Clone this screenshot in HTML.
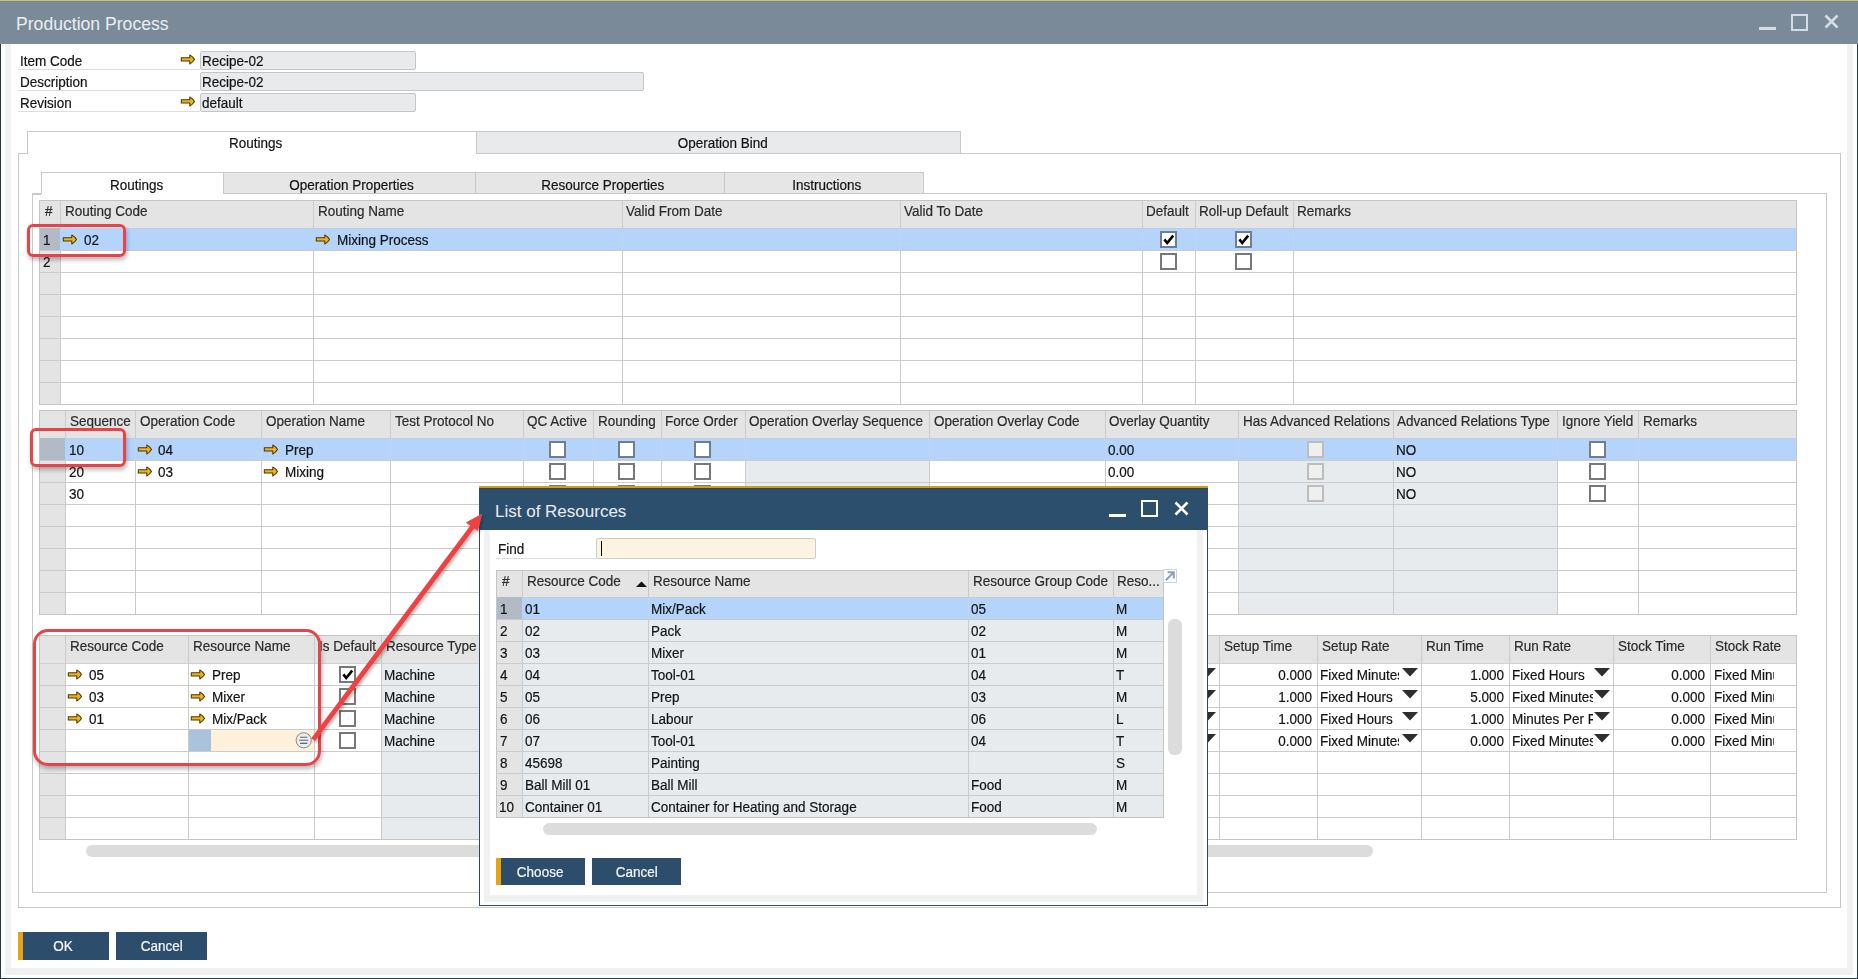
<!DOCTYPE html><html><head><meta charset="utf-8"><style>html,body{margin:0;padding:0;}body{width:1858px;height:979px;overflow:hidden;position:relative;background:#fff;-webkit-text-stroke:0.2px currentColor;font-family:"Liberation Sans", sans-serif;}</style></head><body>
<div style="position:absolute;left:0px;top:0px;width:1858px;height:1px;background:#c6bf9c;"></div>
<div style="position:absolute;left:0px;top:1px;width:1858px;height:1px;background:#81867a;"></div>
<div style="position:absolute;left:0px;top:2px;width:1858px;height:42px;background:#7a8a99;"></div>
<div style="position:absolute;left:16px;top:15.80px;font-size:17.6px;line-height:17.6px;color:#e9eef2;white-space:nowrap;-webkit-text-stroke:0;">Production Process</div>
<div style="position:absolute;left:1759px;top:27px;width:17px;height:3px;background:#d3dce5;"></div>
<div style="position:absolute;left:1791px;top:13.5px;width:17px;height:17px;box-sizing:border-box;border:2px solid #d3dce5;background:transparent;"></div>
<svg style="position:absolute;left:1823px;top:13px" width="17" height="17" viewBox="0 0 17 17"><path d="M2.5 2.5 L14.5 14.5 M14.5 2.5 L2.5 14.5" stroke="#d3dce5" stroke-width="2.6"/></svg>
<div style="position:absolute;left:0px;top:44px;width:1px;height:935px;background:#2a3744;"></div>
<div style="position:absolute;left:1857px;top:44px;width:1px;height:935px;background:#2a3744;"></div>
<div style="position:absolute;left:0px;top:978px;width:1858px;height:1px;background:#2a3744;"></div>
<div style="position:absolute;left:5px;top:44px;width:6px;height:931px;background:#f1f1f1;"></div>
<div style="position:absolute;left:1847px;top:44px;width:6px;height:931px;background:#f1f1f1;"></div>
<div style="position:absolute;left:5px;top:968px;width:1848px;height:7px;background:#f1f1f1;"></div>
<div style="position:absolute;left:20px;top:54.15px;font-size:14.0px;line-height:14.0px;color:#141414;white-space:nowrap;"><span style="display:inline-block;transform:scaleX(0.9643);transform-origin:left 50%">Item Code</span></div>
<div style="position:absolute;left:18px;top:69px;width:182px;height:1px;background:#dddddd;"></div>
<svg style="position:absolute;left:180px;top:52.5px" width="17" height="14" viewBox="0 0 17 14"><path d="M1.3 4.8 H9.8 V1.9 Q12.8 3.6 14.5 6.45 Q12.8 9.3 9.8 11 V8 H1.3 Z" fill="#edb21e" stroke="#4d3600" stroke-width="1.05" stroke-linejoin="round"/></svg>
<div style="position:absolute;left:200px;top:51px;width:216px;height:19px;box-sizing:border-box;border:1px solid #c3c5c8;background:#e8eaec;border-radius:2px;"></div>
<div style="position:absolute;left:202px;top:54.15px;font-size:14.0px;line-height:14.0px;color:#141414;white-space:nowrap;"><span style="display:inline-block;transform:scaleX(0.9643);transform-origin:left 50%">Recipe-02</span></div>
<div style="position:absolute;left:20px;top:75.15px;font-size:14.0px;line-height:14.0px;color:#141414;white-space:nowrap;"><span style="display:inline-block;transform:scaleX(0.9643);transform-origin:left 50%">Description</span></div>
<div style="position:absolute;left:18px;top:90px;width:182px;height:1px;background:#dddddd;"></div>
<div style="position:absolute;left:200px;top:72px;width:444px;height:19px;box-sizing:border-box;border:1px solid #c3c5c8;background:#e8eaec;border-radius:2px;"></div>
<div style="position:absolute;left:202px;top:75.15px;font-size:14.0px;line-height:14.0px;color:#141414;white-space:nowrap;"><span style="display:inline-block;transform:scaleX(0.9643);transform-origin:left 50%">Recipe-02</span></div>
<div style="position:absolute;left:20px;top:96.15px;font-size:14.0px;line-height:14.0px;color:#141414;white-space:nowrap;"><span style="display:inline-block;transform:scaleX(0.9643);transform-origin:left 50%">Revision</span></div>
<div style="position:absolute;left:18px;top:111px;width:182px;height:1px;background:#dddddd;"></div>
<svg style="position:absolute;left:180px;top:94.5px" width="17" height="14" viewBox="0 0 17 14"><path d="M1.3 4.8 H9.8 V1.9 Q12.8 3.6 14.5 6.45 Q12.8 9.3 9.8 11 V8 H1.3 Z" fill="#edb21e" stroke="#4d3600" stroke-width="1.05" stroke-linejoin="round"/></svg>
<div style="position:absolute;left:200px;top:93px;width:216px;height:19px;box-sizing:border-box;border:1px solid #c3c5c8;background:#e8eaec;border-radius:2px;"></div>
<div style="position:absolute;left:202px;top:96.15px;font-size:14.0px;line-height:14.0px;color:#141414;white-space:nowrap;"><span style="display:inline-block;transform:scaleX(0.9643);transform-origin:left 50%">default</span></div>
<div style="position:absolute;left:18px;top:153px;width:1823px;height:755px;box-sizing:border-box;border:1px solid #c9c9c9;background:transparent;"></div>
<div style="position:absolute;left:19px;top:153px;width:8px;height:1px;background:#c9c9c9;"></div>
<div style="position:absolute;left:27px;top:131px;width:1px;height:23px;background:#c9c9c9;"></div>
<div style="position:absolute;left:27px;top:131px;width:449px;height:1px;background:#c9c9c9;"></div>
<div style="position:absolute;left:28px;top:132px;width:448px;height:22px;background:#fff;"></div>
<div style="position:absolute;left:476px;top:131px;width:485px;height:23px;box-sizing:border-box;border:1px solid #c9c9c9;background:#e8eaec;"></div>
<div style="position:absolute;left:-44px;width:600px;text-align:center;top:136.15px;font-size:14.0px;line-height:14.0px;color:#141414;white-space:nowrap;"><span style="display:inline-block;transform:scaleX(0.9643);transform-origin:center 50%">Routings</span></div>
<div style="position:absolute;left:423px;width:600px;text-align:center;top:136.15px;font-size:14.0px;line-height:14.0px;color:#141414;white-space:nowrap;"><span style="display:inline-block;transform:scaleX(0.9643);transform-origin:center 50%">Operation Bind</span></div>
<div style="position:absolute;left:32px;top:193px;width:1795px;height:700px;box-sizing:border-box;border:1px solid #c9c9c9;background:transparent;"></div>
<div style="position:absolute;left:41px;top:172px;width:1px;height:22px;background:#c9c9c9;"></div>
<div style="position:absolute;left:41px;top:172px;width:182px;height:1px;background:#c9c9c9;"></div>
<div style="position:absolute;left:33px;top:194px;width:8px;height:1px;background:#c9c9c9;"></div>
<div style="position:absolute;left:42px;top:173px;width:181px;height:21px;background:#fff;"></div>
<div style="position:absolute;left:223px;top:172px;width:253px;height:22px;box-sizing:border-box;border:1px solid #c9c9c9;background:#e6e6e6;"></div>
<div style="position:absolute;left:52.0px;width:600px;text-align:center;top:177.65px;font-size:14.0px;line-height:14.0px;color:#141414;white-space:nowrap;"><span style="display:inline-block;transform:scaleX(0.9643);transform-origin:center 50%">Operation Properties</span></div>
<div style="position:absolute;left:475px;top:172px;width:250px;height:22px;box-sizing:border-box;border:1px solid #c9c9c9;background:#e6e6e6;"></div>
<div style="position:absolute;left:302.5px;width:600px;text-align:center;top:177.65px;font-size:14.0px;line-height:14.0px;color:#141414;white-space:nowrap;"><span style="display:inline-block;transform:scaleX(0.9643);transform-origin:center 50%">Resource Properties</span></div>
<div style="position:absolute;left:724px;top:172px;width:200px;height:22px;box-sizing:border-box;border:1px solid #c9c9c9;background:#e6e6e6;"></div>
<div style="position:absolute;left:526.5px;width:600px;text-align:center;top:177.65px;font-size:14.0px;line-height:14.0px;color:#141414;white-space:nowrap;"><span style="display:inline-block;transform:scaleX(0.9643);transform-origin:center 50%">Instructions</span></div>
<div style="position:absolute;left:-163px;width:600px;text-align:center;top:177.65px;font-size:14.0px;line-height:14.0px;color:#141414;white-space:nowrap;"><span style="display:inline-block;transform:scaleX(0.9643);transform-origin:center 50%">Routings</span></div>
<div style="position:absolute;left:39px;top:200px;width:1757px;height:204px;background:#fff;"></div>
<div style="position:absolute;left:39px;top:200px;width:1757px;height:28px;background:#e4e4e4;"></div>
<div style="position:absolute;left:39px;top:200px;width:21px;height:204px;background:#e4e4e4;"></div>
<div style="position:absolute;left:39px;top:228px;width:1757px;height:1px;background:#d2d2d2;"></div>
<div style="position:absolute;left:39px;top:250px;width:1757px;height:1px;background:#cbcbcb;"></div>
<div style="position:absolute;left:39px;top:272px;width:1757px;height:1px;background:#cbcbcb;"></div>
<div style="position:absolute;left:39px;top:294px;width:1757px;height:1px;background:#cbcbcb;"></div>
<div style="position:absolute;left:39px;top:316px;width:1757px;height:1px;background:#cbcbcb;"></div>
<div style="position:absolute;left:39px;top:338px;width:1757px;height:1px;background:#cbcbcb;"></div>
<div style="position:absolute;left:39px;top:360px;width:1757px;height:1px;background:#cbcbcb;"></div>
<div style="position:absolute;left:39px;top:382px;width:1757px;height:1px;background:#cbcbcb;"></div>
<div style="position:absolute;left:60px;top:200px;width:1px;height:204px;background:#cbcbcb;"></div>
<div style="position:absolute;left:313px;top:200px;width:1px;height:204px;background:#cbcbcb;"></div>
<div style="position:absolute;left:622px;top:200px;width:1px;height:204px;background:#cbcbcb;"></div>
<div style="position:absolute;left:900px;top:200px;width:1px;height:204px;background:#cbcbcb;"></div>
<div style="position:absolute;left:1142px;top:200px;width:1px;height:204px;background:#cbcbcb;"></div>
<div style="position:absolute;left:1195px;top:200px;width:1px;height:204px;background:#cbcbcb;"></div>
<div style="position:absolute;left:1293px;top:200px;width:1px;height:204px;background:#cbcbcb;"></div>
<div style="position:absolute;left:39px;top:200px;width:1758px;height:205px;box-sizing:border-box;border:1px solid #c4c4c4;background:transparent;"></div>
<div style="position:absolute;left:60px;top:228px;width:1736px;height:22px;background:#b4d4fb;"></div>
<div style="position:absolute;left:40px;top:228px;width:20px;height:22px;background:#b2bbc5;"></div>
<div style="position:absolute;left:60px;top:228px;width:1736px;height:1px;background:#c3cedb;"></div>
<div style="position:absolute;left:313px;top:229px;width:1px;height:21px;background:#c2d5ec;"></div>
<div style="position:absolute;left:622px;top:229px;width:1px;height:21px;background:#c2d5ec;"></div>
<div style="position:absolute;left:900px;top:229px;width:1px;height:21px;background:#c2d5ec;"></div>
<div style="position:absolute;left:1142px;top:229px;width:1px;height:21px;background:#c2d5ec;"></div>
<div style="position:absolute;left:1195px;top:229px;width:1px;height:21px;background:#c2d5ec;"></div>
<div style="position:absolute;left:1293px;top:229px;width:1px;height:21px;background:#c2d5ec;"></div>
<div style="position:absolute;left:45px;top:204.15px;font-size:14.0px;line-height:14.0px;color:#2b2b2b;white-space:nowrap;"><span style="display:inline-block;transform:scaleX(0.9643);transform-origin:left 50%">#</span></div>
<div style="position:absolute;left:65px;top:204.15px;font-size:14.0px;line-height:14.0px;color:#2b2b2b;white-space:nowrap;"><span style="display:inline-block;transform:scaleX(0.9643);transform-origin:left 50%">Routing Code</span></div>
<div style="position:absolute;left:318px;top:204.15px;font-size:14.0px;line-height:14.0px;color:#2b2b2b;white-space:nowrap;"><span style="display:inline-block;transform:scaleX(0.9643);transform-origin:left 50%">Routing Name</span></div>
<div style="position:absolute;left:626px;top:204.15px;font-size:14.0px;line-height:14.0px;color:#2b2b2b;white-space:nowrap;"><span style="display:inline-block;transform:scaleX(0.9643);transform-origin:left 50%">Valid From Date</span></div>
<div style="position:absolute;left:904px;top:204.15px;font-size:14.0px;line-height:14.0px;color:#2b2b2b;white-space:nowrap;"><span style="display:inline-block;transform:scaleX(0.9643);transform-origin:left 50%">Valid To Date</span></div>
<div style="position:absolute;left:1146px;top:204.15px;font-size:14.0px;line-height:14.0px;color:#2b2b2b;white-space:nowrap;"><span style="display:inline-block;transform:scaleX(0.9643);transform-origin:left 50%">Default</span></div>
<div style="position:absolute;left:1199px;top:204.15px;font-size:14.0px;line-height:14.0px;color:#2b2b2b;white-space:nowrap;"><span style="display:inline-block;transform:scaleX(0.9643);transform-origin:left 50%">Roll-up Default</span></div>
<div style="position:absolute;left:1297px;top:204.15px;font-size:14.0px;line-height:14.0px;color:#2b2b2b;white-space:nowrap;"><span style="display:inline-block;transform:scaleX(0.9643);transform-origin:left 50%">Remarks</span></div>
<div style="position:absolute;left:43px;top:233.15px;font-size:14.0px;line-height:14.0px;color:#141414;white-space:nowrap;"><span style="display:inline-block;transform:scaleX(0.9643);transform-origin:left 50%">1</span></div>
<div style="position:absolute;left:43px;top:255.15px;font-size:14.0px;line-height:14.0px;color:#141414;white-space:nowrap;"><span style="display:inline-block;transform:scaleX(0.9643);transform-origin:left 50%">2</span></div>
<svg style="position:absolute;left:62px;top:232.5px" width="17" height="14" viewBox="0 0 17 14"><path d="M1.3 4.8 H9.8 V1.9 Q12.8 3.6 14.5 6.45 Q12.8 9.3 9.8 11 V8 H1.3 Z" fill="#edb21e" stroke="#4d3600" stroke-width="1.05" stroke-linejoin="round"/></svg>
<div style="position:absolute;left:84px;top:233.15px;font-size:14.0px;line-height:14.0px;color:#141414;white-space:nowrap;"><span style="display:inline-block;transform:scaleX(0.9643);transform-origin:left 50%">02</span></div>
<svg style="position:absolute;left:315px;top:232.5px" width="17" height="14" viewBox="0 0 17 14"><path d="M1.3 4.8 H9.8 V1.9 Q12.8 3.6 14.5 6.45 Q12.8 9.3 9.8 11 V8 H1.3 Z" fill="#edb21e" stroke="#4d3600" stroke-width="1.05" stroke-linejoin="round"/></svg>
<div style="position:absolute;left:337px;top:233.15px;font-size:14.0px;line-height:14.0px;color:#141414;white-space:nowrap;"><span style="display:inline-block;transform:scaleX(0.9643);transform-origin:left 50%">Mixing Process</span></div>
<div style="position:absolute;left:1160px;top:231px;width:17px;height:17px;box-sizing:border-box;border:2px solid #6f7f90;background:#fff;"></div>
<svg style="position:absolute;left:1160px;top:231px" width="17" height="17" viewBox="0 0 17 17"><path d="M4.4 8.4 L7.2 12 L13.2 4.6" fill="none" stroke="#000" stroke-width="2.6"/></svg>
<div style="position:absolute;left:1235px;top:231px;width:17px;height:17px;box-sizing:border-box;border:2px solid #6f7f90;background:#fff;"></div>
<svg style="position:absolute;left:1235px;top:231px" width="17" height="17" viewBox="0 0 17 17"><path d="M4.4 8.4 L7.2 12 L13.2 4.6" fill="none" stroke="#000" stroke-width="2.6"/></svg>
<div style="position:absolute;left:1160px;top:253px;width:17px;height:17px;box-sizing:border-box;border:2px solid #787878;background:#fff;"></div>
<div style="position:absolute;left:1235px;top:253px;width:17px;height:17px;box-sizing:border-box;border:2px solid #787878;background:#fff;"></div>
<div style="position:absolute;left:39px;top:410px;width:1757px;height:204px;background:#fff;"></div>
<div style="position:absolute;left:39px;top:410px;width:1757px;height:28px;background:#e4e4e4;"></div>
<div style="position:absolute;left:39px;top:410px;width:26px;height:204px;background:#e4e4e4;"></div>
<div style="position:absolute;left:745px;top:460px;width:184px;height:154px;background:#e8ebee;"></div>
<div style="position:absolute;left:1238px;top:460px;width:319px;height:154px;background:#e8ebee;"></div>
<div style="position:absolute;left:39px;top:438px;width:1757px;height:1px;background:#d2d2d2;"></div>
<div style="position:absolute;left:39px;top:460px;width:1757px;height:1px;background:#cbcbcb;"></div>
<div style="position:absolute;left:39px;top:482px;width:1757px;height:1px;background:#cbcbcb;"></div>
<div style="position:absolute;left:39px;top:504px;width:1757px;height:1px;background:#cbcbcb;"></div>
<div style="position:absolute;left:39px;top:526px;width:1757px;height:1px;background:#cbcbcb;"></div>
<div style="position:absolute;left:39px;top:548px;width:1757px;height:1px;background:#cbcbcb;"></div>
<div style="position:absolute;left:39px;top:570px;width:1757px;height:1px;background:#cbcbcb;"></div>
<div style="position:absolute;left:39px;top:592px;width:1757px;height:1px;background:#cbcbcb;"></div>
<div style="position:absolute;left:65px;top:410px;width:1px;height:204px;background:#cbcbcb;"></div>
<div style="position:absolute;left:135px;top:410px;width:1px;height:204px;background:#cbcbcb;"></div>
<div style="position:absolute;left:261px;top:410px;width:1px;height:204px;background:#cbcbcb;"></div>
<div style="position:absolute;left:390px;top:410px;width:1px;height:204px;background:#cbcbcb;"></div>
<div style="position:absolute;left:523px;top:410px;width:1px;height:204px;background:#cbcbcb;"></div>
<div style="position:absolute;left:593px;top:410px;width:1px;height:204px;background:#cbcbcb;"></div>
<div style="position:absolute;left:661px;top:410px;width:1px;height:204px;background:#cbcbcb;"></div>
<div style="position:absolute;left:745px;top:410px;width:1px;height:204px;background:#cbcbcb;"></div>
<div style="position:absolute;left:929px;top:410px;width:1px;height:204px;background:#cbcbcb;"></div>
<div style="position:absolute;left:1105px;top:410px;width:1px;height:204px;background:#cbcbcb;"></div>
<div style="position:absolute;left:1238px;top:410px;width:1px;height:204px;background:#cbcbcb;"></div>
<div style="position:absolute;left:1393px;top:410px;width:1px;height:204px;background:#cbcbcb;"></div>
<div style="position:absolute;left:1557px;top:410px;width:1px;height:204px;background:#cbcbcb;"></div>
<div style="position:absolute;left:1638px;top:410px;width:1px;height:204px;background:#cbcbcb;"></div>
<div style="position:absolute;left:39px;top:410px;width:1758px;height:205px;box-sizing:border-box;border:1px solid #c4c4c4;background:transparent;"></div>
<div style="position:absolute;left:65px;top:438px;width:1731px;height:22px;background:#b4d4fb;"></div>
<div style="position:absolute;left:40px;top:438px;width:25px;height:22px;background:#b2bbc5;"></div>
<div style="position:absolute;left:65px;top:438px;width:1731px;height:1px;background:#c3cedb;"></div>
<div style="position:absolute;left:135px;top:439px;width:1px;height:21px;background:#c2d5ec;"></div>
<div style="position:absolute;left:261px;top:439px;width:1px;height:21px;background:#c2d5ec;"></div>
<div style="position:absolute;left:390px;top:439px;width:1px;height:21px;background:#c2d5ec;"></div>
<div style="position:absolute;left:523px;top:439px;width:1px;height:21px;background:#c2d5ec;"></div>
<div style="position:absolute;left:593px;top:439px;width:1px;height:21px;background:#c2d5ec;"></div>
<div style="position:absolute;left:661px;top:439px;width:1px;height:21px;background:#c2d5ec;"></div>
<div style="position:absolute;left:745px;top:439px;width:1px;height:21px;background:#c2d5ec;"></div>
<div style="position:absolute;left:929px;top:439px;width:1px;height:21px;background:#c2d5ec;"></div>
<div style="position:absolute;left:1105px;top:439px;width:1px;height:21px;background:#c2d5ec;"></div>
<div style="position:absolute;left:1238px;top:439px;width:1px;height:21px;background:#c2d5ec;"></div>
<div style="position:absolute;left:1393px;top:439px;width:1px;height:21px;background:#c2d5ec;"></div>
<div style="position:absolute;left:1557px;top:439px;width:1px;height:21px;background:#c2d5ec;"></div>
<div style="position:absolute;left:1638px;top:439px;width:1px;height:21px;background:#c2d5ec;"></div>
<div style="position:absolute;left:70px;top:414.15px;font-size:14.0px;line-height:14.0px;color:#2b2b2b;white-space:nowrap;"><span style="display:inline-block;transform:scaleX(0.9643);transform-origin:left 50%">Sequence</span></div>
<div style="position:absolute;left:140px;top:414.15px;font-size:14.0px;line-height:14.0px;color:#2b2b2b;white-space:nowrap;"><span style="display:inline-block;transform:scaleX(0.9643);transform-origin:left 50%">Operation Code</span></div>
<div style="position:absolute;left:266px;top:414.15px;font-size:14.0px;line-height:14.0px;color:#2b2b2b;white-space:nowrap;"><span style="display:inline-block;transform:scaleX(0.9643);transform-origin:left 50%">Operation Name</span></div>
<div style="position:absolute;left:395px;top:414.15px;font-size:14.0px;line-height:14.0px;color:#2b2b2b;white-space:nowrap;"><span style="display:inline-block;transform:scaleX(0.9643);transform-origin:left 50%">Test Protocol No</span></div>
<div style="position:absolute;left:527px;top:414.15px;font-size:14.0px;line-height:14.0px;color:#2b2b2b;white-space:nowrap;"><span style="display:inline-block;transform:scaleX(0.9643);transform-origin:left 50%">QC Active</span></div>
<div style="position:absolute;left:598px;top:414.15px;font-size:14.0px;line-height:14.0px;color:#2b2b2b;white-space:nowrap;"><span style="display:inline-block;transform:scaleX(0.9643);transform-origin:left 50%">Rounding</span></div>
<div style="position:absolute;left:665px;top:414.15px;font-size:14.0px;line-height:14.0px;color:#2b2b2b;white-space:nowrap;"><span style="display:inline-block;transform:scaleX(0.9643);transform-origin:left 50%">Force Order</span></div>
<div style="position:absolute;left:749px;top:414.15px;font-size:14.0px;line-height:14.0px;color:#2b2b2b;white-space:nowrap;"><span style="display:inline-block;transform:scaleX(0.9643);transform-origin:left 50%">Operation Overlay Sequence</span></div>
<div style="position:absolute;left:934px;top:414.15px;font-size:14.0px;line-height:14.0px;color:#2b2b2b;white-space:nowrap;"><span style="display:inline-block;transform:scaleX(0.9643);transform-origin:left 50%">Operation Overlay Code</span></div>
<div style="position:absolute;left:1109px;top:414.15px;font-size:14.0px;line-height:14.0px;color:#2b2b2b;white-space:nowrap;"><span style="display:inline-block;transform:scaleX(0.9643);transform-origin:left 50%">Overlay Quantity</span></div>
<div style="position:absolute;left:1243px;top:414.15px;font-size:14.0px;line-height:14.0px;color:#2b2b2b;white-space:nowrap;"><span style="display:inline-block;transform:scaleX(0.9643);transform-origin:left 50%">Has Advanced Relations</span></div>
<div style="position:absolute;left:1397px;top:414.15px;font-size:14.0px;line-height:14.0px;color:#2b2b2b;white-space:nowrap;"><span style="display:inline-block;transform:scaleX(0.9643);transform-origin:left 50%">Advanced Relations Type</span></div>
<div style="position:absolute;left:1562px;top:414.15px;font-size:14.0px;line-height:14.0px;color:#2b2b2b;white-space:nowrap;"><span style="display:inline-block;transform:scaleX(0.9643);transform-origin:left 50%">Ignore Yield</span></div>
<div style="position:absolute;left:1643px;top:414.15px;font-size:14.0px;line-height:14.0px;color:#2b2b2b;white-space:nowrap;"><span style="display:inline-block;transform:scaleX(0.9643);transform-origin:left 50%">Remarks</span></div>
<div style="position:absolute;left:69px;top:443.15px;font-size:14.0px;line-height:14.0px;color:#141414;white-space:nowrap;"><span style="display:inline-block;transform:scaleX(0.9643);transform-origin:left 50%">10</span></div>
<svg style="position:absolute;left:137px;top:442.5px" width="17" height="14" viewBox="0 0 17 14"><path d="M1.3 4.8 H9.8 V1.9 Q12.8 3.6 14.5 6.45 Q12.8 9.3 9.8 11 V8 H1.3 Z" fill="#edb21e" stroke="#4d3600" stroke-width="1.05" stroke-linejoin="round"/></svg>
<div style="position:absolute;left:158px;top:443.15px;font-size:14.0px;line-height:14.0px;color:#141414;white-space:nowrap;"><span style="display:inline-block;transform:scaleX(0.9643);transform-origin:left 50%">04</span></div>
<svg style="position:absolute;left:263px;top:442.5px" width="17" height="14" viewBox="0 0 17 14"><path d="M1.3 4.8 H9.8 V1.9 Q12.8 3.6 14.5 6.45 Q12.8 9.3 9.8 11 V8 H1.3 Z" fill="#edb21e" stroke="#4d3600" stroke-width="1.05" stroke-linejoin="round"/></svg>
<div style="position:absolute;left:285px;top:443.15px;font-size:14.0px;line-height:14.0px;color:#141414;white-space:nowrap;"><span style="display:inline-block;transform:scaleX(0.9643);transform-origin:left 50%">Prep</span></div>
<div style="position:absolute;left:549px;top:441px;width:17px;height:17px;box-sizing:border-box;border:2px solid #6f7f90;background:#fff;"></div>
<div style="position:absolute;left:618px;top:441px;width:17px;height:17px;box-sizing:border-box;border:2px solid #6f7f90;background:#fff;"></div>
<div style="position:absolute;left:694px;top:441px;width:17px;height:17px;box-sizing:border-box;border:2px solid #6f7f90;background:#fff;"></div>
<div style="position:absolute;left:1108px;top:443.15px;font-size:14.0px;line-height:14.0px;color:#141414;white-space:nowrap;"><span style="display:inline-block;transform:scaleX(0.9643);transform-origin:left 50%">0.00</span></div>
<div style="position:absolute;left:1307px;top:441px;width:17px;height:17px;box-sizing:border-box;border:2px solid #bdbdbd;background:#efefed;"></div>
<div style="position:absolute;left:1396px;top:443.15px;font-size:14.0px;line-height:14.0px;color:#141414;white-space:nowrap;"><span style="display:inline-block;transform:scaleX(0.9643);transform-origin:left 50%">NO</span></div>
<div style="position:absolute;left:1589px;top:441px;width:17px;height:17px;box-sizing:border-box;border:2px solid #6f7f90;background:#fff;"></div>
<div style="position:absolute;left:69px;top:465.15px;font-size:14.0px;line-height:14.0px;color:#141414;white-space:nowrap;"><span style="display:inline-block;transform:scaleX(0.9643);transform-origin:left 50%">20</span></div>
<svg style="position:absolute;left:137px;top:464.5px" width="17" height="14" viewBox="0 0 17 14"><path d="M1.3 4.8 H9.8 V1.9 Q12.8 3.6 14.5 6.45 Q12.8 9.3 9.8 11 V8 H1.3 Z" fill="#edb21e" stroke="#4d3600" stroke-width="1.05" stroke-linejoin="round"/></svg>
<div style="position:absolute;left:158px;top:465.15px;font-size:14.0px;line-height:14.0px;color:#141414;white-space:nowrap;"><span style="display:inline-block;transform:scaleX(0.9643);transform-origin:left 50%">03</span></div>
<svg style="position:absolute;left:263px;top:464.5px" width="17" height="14" viewBox="0 0 17 14"><path d="M1.3 4.8 H9.8 V1.9 Q12.8 3.6 14.5 6.45 Q12.8 9.3 9.8 11 V8 H1.3 Z" fill="#edb21e" stroke="#4d3600" stroke-width="1.05" stroke-linejoin="round"/></svg>
<div style="position:absolute;left:285px;top:465.15px;font-size:14.0px;line-height:14.0px;color:#141414;white-space:nowrap;"><span style="display:inline-block;transform:scaleX(0.9643);transform-origin:left 50%">Mixing</span></div>
<div style="position:absolute;left:549px;top:463px;width:17px;height:17px;box-sizing:border-box;border:2px solid #787878;background:#fff;"></div>
<div style="position:absolute;left:618px;top:463px;width:17px;height:17px;box-sizing:border-box;border:2px solid #787878;background:#fff;"></div>
<div style="position:absolute;left:694px;top:463px;width:17px;height:17px;box-sizing:border-box;border:2px solid #787878;background:#fff;"></div>
<div style="position:absolute;left:1108px;top:465.15px;font-size:14.0px;line-height:14.0px;color:#141414;white-space:nowrap;"><span style="display:inline-block;transform:scaleX(0.9643);transform-origin:left 50%">0.00</span></div>
<div style="position:absolute;left:1307px;top:463px;width:17px;height:17px;box-sizing:border-box;border:2px solid #bdbdbd;background:#efefed;"></div>
<div style="position:absolute;left:1396px;top:465.15px;font-size:14.0px;line-height:14.0px;color:#141414;white-space:nowrap;"><span style="display:inline-block;transform:scaleX(0.9643);transform-origin:left 50%">NO</span></div>
<div style="position:absolute;left:1589px;top:463px;width:17px;height:17px;box-sizing:border-box;border:2px solid #787878;background:#fff;"></div>
<div style="position:absolute;left:69px;top:487.15px;font-size:14.0px;line-height:14.0px;color:#141414;white-space:nowrap;"><span style="display:inline-block;transform:scaleX(0.9643);transform-origin:left 50%">30</span></div>
<div style="position:absolute;left:1307px;top:485px;width:17px;height:17px;box-sizing:border-box;border:2px solid #bdbdbd;background:#efefed;"></div>
<div style="position:absolute;left:1396px;top:487.15px;font-size:14.0px;line-height:14.0px;color:#141414;white-space:nowrap;"><span style="display:inline-block;transform:scaleX(0.9643);transform-origin:left 50%">NO</span></div>
<div style="position:absolute;left:1589px;top:485px;width:17px;height:17px;box-sizing:border-box;border:2px solid #787878;background:#fff;"></div>
<div style="position:absolute;left:549px;top:485px;width:17px;height:17px;box-sizing:border-box;border:2px solid #787878;background:#fff;"></div>
<div style="position:absolute;left:618px;top:485px;width:17px;height:17px;box-sizing:border-box;border:2px solid #787878;background:#fff;"></div>
<div style="position:absolute;left:694px;top:485px;width:17px;height:17px;box-sizing:border-box;border:2px solid #787878;background:#fff;"></div>
<div style="position:absolute;left:39px;top:635px;width:1757px;height:204px;background:#fff;"></div>
<div style="position:absolute;left:39px;top:635px;width:1757px;height:28px;background:#e4e4e4;"></div>
<div style="position:absolute;left:39px;top:635px;width:26px;height:204px;background:#e4e4e4;"></div>
<div style="position:absolute;left:381px;top:663px;width:200px;height:176px;background:#e8ebee;"></div>
<div style="position:absolute;left:39px;top:663px;width:1757px;height:1px;background:#d2d2d2;"></div>
<div style="position:absolute;left:39px;top:685px;width:1757px;height:1px;background:#cbcbcb;"></div>
<div style="position:absolute;left:39px;top:707px;width:1757px;height:1px;background:#cbcbcb;"></div>
<div style="position:absolute;left:39px;top:729px;width:1757px;height:1px;background:#cbcbcb;"></div>
<div style="position:absolute;left:39px;top:751px;width:1757px;height:1px;background:#cbcbcb;"></div>
<div style="position:absolute;left:39px;top:773px;width:1757px;height:1px;background:#cbcbcb;"></div>
<div style="position:absolute;left:39px;top:795px;width:1757px;height:1px;background:#cbcbcb;"></div>
<div style="position:absolute;left:39px;top:817px;width:1757px;height:1px;background:#cbcbcb;"></div>
<div style="position:absolute;left:65px;top:635px;width:1px;height:204px;background:#cbcbcb;"></div>
<div style="position:absolute;left:188px;top:635px;width:1px;height:204px;background:#cbcbcb;"></div>
<div style="position:absolute;left:314px;top:635px;width:1px;height:204px;background:#cbcbcb;"></div>
<div style="position:absolute;left:381px;top:635px;width:1px;height:204px;background:#cbcbcb;"></div>
<div style="position:absolute;left:1219px;top:635px;width:1px;height:204px;background:#cbcbcb;"></div>
<div style="position:absolute;left:1317px;top:635px;width:1px;height:204px;background:#cbcbcb;"></div>
<div style="position:absolute;left:1421px;top:635px;width:1px;height:204px;background:#cbcbcb;"></div>
<div style="position:absolute;left:1509px;top:635px;width:1px;height:204px;background:#cbcbcb;"></div>
<div style="position:absolute;left:1613px;top:635px;width:1px;height:204px;background:#cbcbcb;"></div>
<div style="position:absolute;left:1710px;top:635px;width:1px;height:204px;background:#cbcbcb;"></div>
<div style="position:absolute;left:39px;top:635px;width:1758px;height:205px;box-sizing:border-box;border:1px solid #c4c4c4;background:transparent;"></div>
<div style="position:absolute;left:70px;top:639.15px;font-size:14.0px;line-height:14.0px;color:#2b2b2b;white-space:nowrap;"><span style="display:inline-block;transform:scaleX(0.9643);transform-origin:left 50%">Resource Code</span></div>
<div style="position:absolute;left:193px;top:639.15px;font-size:14.0px;line-height:14.0px;color:#2b2b2b;white-space:nowrap;"><span style="display:inline-block;transform:scaleX(0.9643);transform-origin:left 50%">Resource Name</span></div>
<div style="position:absolute;left:319px;top:639.15px;font-size:14.0px;line-height:14.0px;color:#2b2b2b;white-space:nowrap;"><span style="display:inline-block;transform:scaleX(0.9643);transform-origin:left 50%">Is Default</span></div>
<div style="position:absolute;left:386px;top:639.15px;font-size:14.0px;line-height:14.0px;color:#2b2b2b;white-space:nowrap;"><span style="display:inline-block;transform:scaleX(0.9643);transform-origin:left 50%">Resource Type</span></div>
<div style="position:absolute;left:1224px;top:639.15px;font-size:14.0px;line-height:14.0px;color:#2b2b2b;white-space:nowrap;"><span style="display:inline-block;transform:scaleX(0.9643);transform-origin:left 50%">Setup Time</span></div>
<div style="position:absolute;left:1322px;top:639.15px;font-size:14.0px;line-height:14.0px;color:#2b2b2b;white-space:nowrap;"><span style="display:inline-block;transform:scaleX(0.9643);transform-origin:left 50%">Setup Rate</span></div>
<div style="position:absolute;left:1426px;top:639.15px;font-size:14.0px;line-height:14.0px;color:#2b2b2b;white-space:nowrap;"><span style="display:inline-block;transform:scaleX(0.9643);transform-origin:left 50%">Run Time</span></div>
<div style="position:absolute;left:1514px;top:639.15px;font-size:14.0px;line-height:14.0px;color:#2b2b2b;white-space:nowrap;"><span style="display:inline-block;transform:scaleX(0.9643);transform-origin:left 50%">Run Rate</span></div>
<div style="position:absolute;left:1618px;top:639.15px;font-size:14.0px;line-height:14.0px;color:#2b2b2b;white-space:nowrap;"><span style="display:inline-block;transform:scaleX(0.9643);transform-origin:left 50%">Stock Time</span></div>
<div style="position:absolute;left:1715px;top:639.15px;font-size:14.0px;line-height:14.0px;color:#2b2b2b;white-space:nowrap;"><span style="display:inline-block;transform:scaleX(0.9643);transform-origin:left 50%">Stock Rate</span></div>
<svg style="position:absolute;left:67px;top:667.5px" width="17" height="14" viewBox="0 0 17 14"><path d="M1.3 4.8 H9.8 V1.9 Q12.8 3.6 14.5 6.45 Q12.8 9.3 9.8 11 V8 H1.3 Z" fill="#edb21e" stroke="#4d3600" stroke-width="1.05" stroke-linejoin="round"/></svg>
<div style="position:absolute;left:89px;top:668.15px;font-size:14.0px;line-height:14.0px;color:#141414;white-space:nowrap;"><span style="display:inline-block;transform:scaleX(0.9643);transform-origin:left 50%">05</span></div>
<svg style="position:absolute;left:190px;top:667.5px" width="17" height="14" viewBox="0 0 17 14"><path d="M1.3 4.8 H9.8 V1.9 Q12.8 3.6 14.5 6.45 Q12.8 9.3 9.8 11 V8 H1.3 Z" fill="#edb21e" stroke="#4d3600" stroke-width="1.05" stroke-linejoin="round"/></svg>
<div style="position:absolute;left:212px;top:668.15px;font-size:14.0px;line-height:14.0px;color:#141414;white-space:nowrap;"><span style="display:inline-block;transform:scaleX(0.9643);transform-origin:left 50%">Prep</span></div>
<div style="position:absolute;left:339px;top:666px;width:17px;height:17px;box-sizing:border-box;border:2px solid #787878;background:#fff;"></div>
<svg style="position:absolute;left:339px;top:666px" width="17" height="17" viewBox="0 0 17 17"><path d="M4.4 8.4 L7.2 12 L13.2 4.6" fill="none" stroke="#000" stroke-width="2.6"/></svg>
<div style="position:absolute;left:384px;top:668.15px;font-size:14.0px;line-height:14.0px;color:#141414;white-space:nowrap;"><span style="display:inline-block;transform:scaleX(0.9643);transform-origin:left 50%">Machine</span></div>
<svg style="position:absolute;left:1200px;top:668px" width="16" height="9" viewBox="0 0 16 9"><path d="M0 0 H16 L8 8.5 Z" fill="#2e2e2e"/></svg>
<div style="position:absolute;left:912px;width:400px;text-align:right;top:668.15px;font-size:14.0px;line-height:14.0px;color:#141414;white-space:nowrap;"><span style="display:inline-block;transform:scaleX(0.9643);transform-origin:right 50%">0.000</span></div>
<div style="position:absolute;left:1320px;width:79px;overflow:hidden;top:668.15px;font-size:14.0px;line-height:14.0px;color:#141414;white-space:nowrap;"><span style="display:inline-block;transform:scaleX(0.9643);transform-origin:left 50%">Fixed Minutes</span></div>
<svg style="position:absolute;left:1402px;top:668px" width="16" height="9" viewBox="0 0 16 9"><path d="M0 0 H16 L8 8.5 Z" fill="#2e2e2e"/></svg>
<div style="position:absolute;left:1104px;width:400px;text-align:right;top:668.15px;font-size:14.0px;line-height:14.0px;color:#141414;white-space:nowrap;"><span style="display:inline-block;transform:scaleX(0.9643);transform-origin:right 50%">1.000</span></div>
<div style="position:absolute;left:1512px;width:81px;overflow:hidden;top:668.15px;font-size:14.0px;line-height:14.0px;color:#141414;white-space:nowrap;"><span style="display:inline-block;transform:scaleX(0.9643);transform-origin:left 50%">Fixed Hours</span></div>
<svg style="position:absolute;left:1594px;top:668px" width="16" height="9" viewBox="0 0 16 9"><path d="M0 0 H16 L8 8.5 Z" fill="#2e2e2e"/></svg>
<div style="position:absolute;left:1305px;width:400px;text-align:right;top:668.15px;font-size:14.0px;line-height:14.0px;color:#141414;white-space:nowrap;"><span style="display:inline-block;transform:scaleX(0.9643);transform-origin:right 50%">0.000</span></div>
<div style="position:absolute;left:1714px;width:60px;overflow:hidden;top:668.15px;font-size:14.0px;line-height:14.0px;color:#141414;white-space:nowrap;"><span style="display:inline-block;transform:scaleX(0.9643);transform-origin:left 50%">Fixed Minutes</span></div>
<svg style="position:absolute;left:67px;top:689.5px" width="17" height="14" viewBox="0 0 17 14"><path d="M1.3 4.8 H9.8 V1.9 Q12.8 3.6 14.5 6.45 Q12.8 9.3 9.8 11 V8 H1.3 Z" fill="#edb21e" stroke="#4d3600" stroke-width="1.05" stroke-linejoin="round"/></svg>
<div style="position:absolute;left:89px;top:690.15px;font-size:14.0px;line-height:14.0px;color:#141414;white-space:nowrap;"><span style="display:inline-block;transform:scaleX(0.9643);transform-origin:left 50%">03</span></div>
<svg style="position:absolute;left:190px;top:689.5px" width="17" height="14" viewBox="0 0 17 14"><path d="M1.3 4.8 H9.8 V1.9 Q12.8 3.6 14.5 6.45 Q12.8 9.3 9.8 11 V8 H1.3 Z" fill="#edb21e" stroke="#4d3600" stroke-width="1.05" stroke-linejoin="round"/></svg>
<div style="position:absolute;left:212px;top:690.15px;font-size:14.0px;line-height:14.0px;color:#141414;white-space:nowrap;"><span style="display:inline-block;transform:scaleX(0.9643);transform-origin:left 50%">Mixer</span></div>
<div style="position:absolute;left:339px;top:688px;width:17px;height:17px;box-sizing:border-box;border:2px solid #787878;background:#fff;"></div>
<div style="position:absolute;left:384px;top:690.15px;font-size:14.0px;line-height:14.0px;color:#141414;white-space:nowrap;"><span style="display:inline-block;transform:scaleX(0.9643);transform-origin:left 50%">Machine</span></div>
<svg style="position:absolute;left:1200px;top:690px" width="16" height="9" viewBox="0 0 16 9"><path d="M0 0 H16 L8 8.5 Z" fill="#2e2e2e"/></svg>
<div style="position:absolute;left:912px;width:400px;text-align:right;top:690.15px;font-size:14.0px;line-height:14.0px;color:#141414;white-space:nowrap;"><span style="display:inline-block;transform:scaleX(0.9643);transform-origin:right 50%">1.000</span></div>
<div style="position:absolute;left:1320px;width:79px;overflow:hidden;top:690.15px;font-size:14.0px;line-height:14.0px;color:#141414;white-space:nowrap;"><span style="display:inline-block;transform:scaleX(0.9643);transform-origin:left 50%">Fixed Hours</span></div>
<svg style="position:absolute;left:1402px;top:690px" width="16" height="9" viewBox="0 0 16 9"><path d="M0 0 H16 L8 8.5 Z" fill="#2e2e2e"/></svg>
<div style="position:absolute;left:1104px;width:400px;text-align:right;top:690.15px;font-size:14.0px;line-height:14.0px;color:#141414;white-space:nowrap;"><span style="display:inline-block;transform:scaleX(0.9643);transform-origin:right 50%">5.000</span></div>
<div style="position:absolute;left:1512px;width:81px;overflow:hidden;top:690.15px;font-size:14.0px;line-height:14.0px;color:#141414;white-space:nowrap;"><span style="display:inline-block;transform:scaleX(0.9643);transform-origin:left 50%">Fixed Minutes</span></div>
<svg style="position:absolute;left:1594px;top:690px" width="16" height="9" viewBox="0 0 16 9"><path d="M0 0 H16 L8 8.5 Z" fill="#2e2e2e"/></svg>
<div style="position:absolute;left:1305px;width:400px;text-align:right;top:690.15px;font-size:14.0px;line-height:14.0px;color:#141414;white-space:nowrap;"><span style="display:inline-block;transform:scaleX(0.9643);transform-origin:right 50%">0.000</span></div>
<div style="position:absolute;left:1714px;width:60px;overflow:hidden;top:690.15px;font-size:14.0px;line-height:14.0px;color:#141414;white-space:nowrap;"><span style="display:inline-block;transform:scaleX(0.9643);transform-origin:left 50%">Fixed Minutes</span></div>
<svg style="position:absolute;left:67px;top:711.5px" width="17" height="14" viewBox="0 0 17 14"><path d="M1.3 4.8 H9.8 V1.9 Q12.8 3.6 14.5 6.45 Q12.8 9.3 9.8 11 V8 H1.3 Z" fill="#edb21e" stroke="#4d3600" stroke-width="1.05" stroke-linejoin="round"/></svg>
<div style="position:absolute;left:89px;top:712.15px;font-size:14.0px;line-height:14.0px;color:#141414;white-space:nowrap;"><span style="display:inline-block;transform:scaleX(0.9643);transform-origin:left 50%">01</span></div>
<svg style="position:absolute;left:190px;top:711.5px" width="17" height="14" viewBox="0 0 17 14"><path d="M1.3 4.8 H9.8 V1.9 Q12.8 3.6 14.5 6.45 Q12.8 9.3 9.8 11 V8 H1.3 Z" fill="#edb21e" stroke="#4d3600" stroke-width="1.05" stroke-linejoin="round"/></svg>
<div style="position:absolute;left:212px;top:712.15px;font-size:14.0px;line-height:14.0px;color:#141414;white-space:nowrap;"><span style="display:inline-block;transform:scaleX(0.9643);transform-origin:left 50%">Mix/Pack</span></div>
<div style="position:absolute;left:339px;top:710px;width:17px;height:17px;box-sizing:border-box;border:2px solid #787878;background:#fff;"></div>
<div style="position:absolute;left:384px;top:712.15px;font-size:14.0px;line-height:14.0px;color:#141414;white-space:nowrap;"><span style="display:inline-block;transform:scaleX(0.9643);transform-origin:left 50%">Machine</span></div>
<svg style="position:absolute;left:1200px;top:712px" width="16" height="9" viewBox="0 0 16 9"><path d="M0 0 H16 L8 8.5 Z" fill="#2e2e2e"/></svg>
<div style="position:absolute;left:912px;width:400px;text-align:right;top:712.15px;font-size:14.0px;line-height:14.0px;color:#141414;white-space:nowrap;"><span style="display:inline-block;transform:scaleX(0.9643);transform-origin:right 50%">1.000</span></div>
<div style="position:absolute;left:1320px;width:79px;overflow:hidden;top:712.15px;font-size:14.0px;line-height:14.0px;color:#141414;white-space:nowrap;"><span style="display:inline-block;transform:scaleX(0.9643);transform-origin:left 50%">Fixed Hours</span></div>
<svg style="position:absolute;left:1402px;top:712px" width="16" height="9" viewBox="0 0 16 9"><path d="M0 0 H16 L8 8.5 Z" fill="#2e2e2e"/></svg>
<div style="position:absolute;left:1104px;width:400px;text-align:right;top:712.15px;font-size:14.0px;line-height:14.0px;color:#141414;white-space:nowrap;"><span style="display:inline-block;transform:scaleX(0.9643);transform-origin:right 50%">1.000</span></div>
<div style="position:absolute;left:1512px;width:81px;overflow:hidden;top:712.15px;font-size:14.0px;line-height:14.0px;color:#141414;white-space:nowrap;"><span style="display:inline-block;transform:scaleX(0.9643);transform-origin:left 50%">Minutes Per F</span></div>
<svg style="position:absolute;left:1594px;top:712px" width="16" height="9" viewBox="0 0 16 9"><path d="M0 0 H16 L8 8.5 Z" fill="#2e2e2e"/></svg>
<div style="position:absolute;left:1305px;width:400px;text-align:right;top:712.15px;font-size:14.0px;line-height:14.0px;color:#141414;white-space:nowrap;"><span style="display:inline-block;transform:scaleX(0.9643);transform-origin:right 50%">0.000</span></div>
<div style="position:absolute;left:1714px;width:60px;overflow:hidden;top:712.15px;font-size:14.0px;line-height:14.0px;color:#141414;white-space:nowrap;"><span style="display:inline-block;transform:scaleX(0.9643);transform-origin:left 50%">Fixed Minutes</span></div>
<div style="position:absolute;left:339px;top:732px;width:17px;height:17px;box-sizing:border-box;border:2px solid #787878;background:#fff;"></div>
<div style="position:absolute;left:384px;top:734.15px;font-size:14.0px;line-height:14.0px;color:#141414;white-space:nowrap;"><span style="display:inline-block;transform:scaleX(0.9643);transform-origin:left 50%">Machine</span></div>
<svg style="position:absolute;left:1200px;top:734px" width="16" height="9" viewBox="0 0 16 9"><path d="M0 0 H16 L8 8.5 Z" fill="#2e2e2e"/></svg>
<div style="position:absolute;left:912px;width:400px;text-align:right;top:734.15px;font-size:14.0px;line-height:14.0px;color:#141414;white-space:nowrap;"><span style="display:inline-block;transform:scaleX(0.9643);transform-origin:right 50%">0.000</span></div>
<div style="position:absolute;left:1320px;width:79px;overflow:hidden;top:734.15px;font-size:14.0px;line-height:14.0px;color:#141414;white-space:nowrap;"><span style="display:inline-block;transform:scaleX(0.9643);transform-origin:left 50%">Fixed Minutes</span></div>
<svg style="position:absolute;left:1402px;top:734px" width="16" height="9" viewBox="0 0 16 9"><path d="M0 0 H16 L8 8.5 Z" fill="#2e2e2e"/></svg>
<div style="position:absolute;left:1104px;width:400px;text-align:right;top:734.15px;font-size:14.0px;line-height:14.0px;color:#141414;white-space:nowrap;"><span style="display:inline-block;transform:scaleX(0.9643);transform-origin:right 50%">0.000</span></div>
<div style="position:absolute;left:1512px;width:81px;overflow:hidden;top:734.15px;font-size:14.0px;line-height:14.0px;color:#141414;white-space:nowrap;"><span style="display:inline-block;transform:scaleX(0.9643);transform-origin:left 50%">Fixed Minutes</span></div>
<svg style="position:absolute;left:1594px;top:734px" width="16" height="9" viewBox="0 0 16 9"><path d="M0 0 H16 L8 8.5 Z" fill="#2e2e2e"/></svg>
<div style="position:absolute;left:1305px;width:400px;text-align:right;top:734.15px;font-size:14.0px;line-height:14.0px;color:#141414;white-space:nowrap;"><span style="display:inline-block;transform:scaleX(0.9643);transform-origin:right 50%">0.000</span></div>
<div style="position:absolute;left:1714px;width:60px;overflow:hidden;top:734.15px;font-size:14.0px;line-height:14.0px;color:#141414;white-space:nowrap;"><span style="display:inline-block;transform:scaleX(0.9643);transform-origin:left 50%">Fixed Minutes</span></div>
<div style="position:absolute;left:189px;top:730px;width:22px;height:21px;background:#a9c3dc;"></div>
<div style="position:absolute;left:211px;top:730px;width:103px;height:21px;background:#fdf1dc;"></div>
<svg style="position:absolute;left:295px;top:732px" width="17" height="17" viewBox="0 0 17 17"><circle cx="8.7" cy="8.3" r="7.6" fill="#e9edf1" stroke="#8f877c" stroke-width="1"/><path d="M5 5.3 H12.4 M4.2 8.3 H13.2 M5 11.4 H12.4" stroke="#5f6670" stroke-width="1.1"/></svg>
<div style="position:absolute;left:86px;top:845px;width:1287px;height:12px;background:#dcdcdc;border-radius:6px;"></div>
<div style="position:absolute;left:18px;top:932px;width:91px;height:28px;background:#2d4d6c;"></div>
<div style="position:absolute;left:18px;top:932px;width:5px;height:28px;background:#e5a50f;"></div>
<div style="position:absolute;left:-236.5px;width:600px;text-align:center;top:938.65px;font-size:14.0px;line-height:14.0px;color:#f5f7fa;white-space:nowrap;"><span style="display:inline-block;transform:scaleX(0.9643);transform-origin:center 50%">OK</span></div>
<div style="position:absolute;left:116px;top:932px;width:91px;height:28px;background:#2d4d6c;"></div>
<div style="position:absolute;left:-138.5px;width:600px;text-align:center;top:938.65px;font-size:14.0px;line-height:14.0px;color:#f5f7fa;white-space:nowrap;"><span style="display:inline-block;transform:scaleX(0.9643);transform-origin:center 50%">Cancel</span></div>
<div style="position:absolute;left:27px;top:224px;width:99px;height:33px;box-sizing:border-box;border:3px solid #e4454b;background:transparent;border-radius:6px;box-shadow:1px 3px 4px rgba(0,0,0,0.28);"></div>
<div style="position:absolute;left:30px;top:428px;width:96px;height:39px;box-sizing:border-box;border:3px solid #e4454b;background:transparent;border-radius:6px;box-shadow:1px 3px 4px rgba(0,0,0,0.28);"></div>
<div style="position:absolute;left:33px;top:629px;width:288px;height:137px;box-sizing:border-box;border:3px solid #e4454b;background:transparent;border-radius:15px;box-shadow:1px 3px 4px rgba(0,0,0,0.28);"></div>
<div style="position:absolute;left:479px;top:486px;width:729px;height:420px;background:#fff;"></div>
<div style="position:absolute;left:479px;top:486px;width:729px;height:2px;background:#d09d22;"></div>
<div style="position:absolute;left:479px;top:488px;width:729px;height:42px;background:#2d4f6e;"></div>
<div style="position:absolute;left:479px;top:488px;width:729px;height:1px;background:#34474a;"></div>
<div style="position:absolute;left:495px;top:502.61px;font-size:17px;line-height:17px;color:#e9eef3;white-space:nowrap;-webkit-text-stroke:0;">List of Resources</div>
<div style="position:absolute;left:1109px;top:514px;width:17px;height:3px;background:#ffffff;"></div>
<div style="position:absolute;left:1141px;top:500px;width:17px;height:17px;box-sizing:border-box;border:2px solid #ffffff;background:transparent;"></div>
<svg style="position:absolute;left:1173px;top:500px" width="17" height="17" viewBox="0 0 17 17"><path d="M2.5 2.5 L14.5 14.5 M14.5 2.5 L2.5 14.5" stroke="#ffffff" stroke-width="2.6"/></svg>
<div style="position:absolute;left:479px;top:530px;width:1px;height:376px;background:#33475a;"></div>
<div style="position:absolute;left:1207px;top:530px;width:1px;height:376px;background:#33475a;"></div>
<div style="position:absolute;left:479px;top:905px;width:729px;height:1px;background:#33475a;"></div>
<div style="position:absolute;left:484px;top:530px;width:6px;height:372px;background:#f1f1f1;"></div>
<div style="position:absolute;left:1197px;top:530px;width:6px;height:372px;background:#f1f1f1;"></div>
<div style="position:absolute;left:484px;top:895px;width:719px;height:7px;background:#f1f1f1;"></div>
<div style="position:absolute;left:498px;top:542.15px;font-size:14.0px;line-height:14.0px;color:#141414;white-space:nowrap;"><span style="display:inline-block;transform:scaleX(0.9643);transform-origin:left 50%">Find</span></div>
<div style="position:absolute;left:496px;top:558px;width:100px;height:1px;background:#dddddd;"></div>
<div style="position:absolute;left:596px;top:538px;width:220px;height:21px;box-sizing:border-box;border:1px solid #cdcdcd;background:#fdf3e1;border-radius:2px;"></div>
<div style="position:absolute;left:601px;top:541px;width:1px;height:15px;background:#000;"></div>
<div style="position:absolute;left:496px;top:570px;width:667px;height:247px;background:#e8ebee;"></div>
<div style="position:absolute;left:496px;top:570px;width:667px;height:27px;background:#e4e4e4;"></div>
<div style="position:absolute;left:496px;top:570px;width:26px;height:247px;background:#e4e4e4;"></div>
<div style="position:absolute;left:496px;top:597px;width:667px;height:1px;background:#d2d2d2;"></div>
<div style="position:absolute;left:496px;top:619px;width:667px;height:1px;background:#cbcbcb;"></div>
<div style="position:absolute;left:496px;top:641px;width:667px;height:1px;background:#cbcbcb;"></div>
<div style="position:absolute;left:496px;top:663px;width:667px;height:1px;background:#cbcbcb;"></div>
<div style="position:absolute;left:496px;top:685px;width:667px;height:1px;background:#cbcbcb;"></div>
<div style="position:absolute;left:496px;top:707px;width:667px;height:1px;background:#cbcbcb;"></div>
<div style="position:absolute;left:496px;top:729px;width:667px;height:1px;background:#cbcbcb;"></div>
<div style="position:absolute;left:496px;top:751px;width:667px;height:1px;background:#cbcbcb;"></div>
<div style="position:absolute;left:496px;top:773px;width:667px;height:1px;background:#cbcbcb;"></div>
<div style="position:absolute;left:496px;top:795px;width:667px;height:1px;background:#cbcbcb;"></div>
<div style="position:absolute;left:522px;top:570px;width:1px;height:247px;background:#cbcbcb;"></div>
<div style="position:absolute;left:648px;top:570px;width:1px;height:247px;background:#cbcbcb;"></div>
<div style="position:absolute;left:968px;top:570px;width:1px;height:247px;background:#cbcbcb;"></div>
<div style="position:absolute;left:1113px;top:570px;width:1px;height:247px;background:#cbcbcb;"></div>
<div style="position:absolute;left:496px;top:570px;width:668px;height:248px;box-sizing:border-box;border:1px solid #c4c4c4;background:transparent;"></div>
<div style="position:absolute;left:522px;top:597px;width:641px;height:22px;background:#b4d4fb;"></div>
<div style="position:absolute;left:497px;top:597px;width:25px;height:22px;background:#b2bbc5;"></div>
<div style="position:absolute;left:522px;top:597px;width:641px;height:1px;background:#c3cedb;"></div>
<div style="position:absolute;left:648px;top:598px;width:1px;height:21px;background:#c2d5ec;"></div>
<div style="position:absolute;left:968px;top:598px;width:1px;height:21px;background:#c2d5ec;"></div>
<div style="position:absolute;left:1113px;top:598px;width:1px;height:21px;background:#c2d5ec;"></div>
<div style="position:absolute;left:502px;top:574.15px;font-size:14.0px;line-height:14.0px;color:#2b2b2b;white-space:nowrap;"><span style="display:inline-block;transform:scaleX(0.9643);transform-origin:left 50%">#</span></div>
<div style="position:absolute;left:527px;top:574.15px;font-size:14.0px;line-height:14.0px;color:#2b2b2b;white-space:nowrap;"><span style="display:inline-block;transform:scaleX(0.9643);transform-origin:left 50%">Resource Code</span></div>
<div style="position:absolute;left:653px;top:574.15px;font-size:14.0px;line-height:14.0px;color:#2b2b2b;white-space:nowrap;"><span style="display:inline-block;transform:scaleX(0.9643);transform-origin:left 50%">Resource Name</span></div>
<div style="position:absolute;left:973px;top:574.15px;font-size:14.0px;line-height:14.0px;color:#2b2b2b;white-space:nowrap;"><span style="display:inline-block;transform:scaleX(0.9643);transform-origin:left 50%">Resource Group Code</span></div>
<div style="position:absolute;left:1117px;top:574.15px;font-size:14.0px;line-height:14.0px;color:#2b2b2b;white-space:nowrap;"><span style="display:inline-block;transform:scaleX(0.9643);transform-origin:left 50%">Reso...</span></div>
<svg style="position:absolute;left:636px;top:581px" width="11" height="6" viewBox="0 0 11 6"><path d="M0 6 L5.5 0.5 L11 6 Z" fill="#111"/></svg>
<div style="position:absolute;left:500px;top:602.15px;font-size:14.0px;line-height:14.0px;color:#141414;white-space:nowrap;"><span style="display:inline-block;transform:scaleX(0.9643);transform-origin:left 50%">1</span></div>
<div style="position:absolute;left:525px;top:602.15px;font-size:14.0px;line-height:14.0px;color:#141414;white-space:nowrap;"><span style="display:inline-block;transform:scaleX(0.9643);transform-origin:left 50%">01</span></div>
<div style="position:absolute;left:651px;top:602.15px;font-size:14.0px;line-height:14.0px;color:#141414;white-space:nowrap;"><span style="display:inline-block;transform:scaleX(0.9643);transform-origin:left 50%">Mix/Pack</span></div>
<div style="position:absolute;left:971px;top:602.15px;font-size:14.0px;line-height:14.0px;color:#141414;white-space:nowrap;"><span style="display:inline-block;transform:scaleX(0.9643);transform-origin:left 50%">05</span></div>
<div style="position:absolute;left:1116px;top:602.15px;font-size:14.0px;line-height:14.0px;color:#141414;white-space:nowrap;"><span style="display:inline-block;transform:scaleX(0.9643);transform-origin:left 50%">M</span></div>
<div style="position:absolute;left:500px;top:624.15px;font-size:14.0px;line-height:14.0px;color:#141414;white-space:nowrap;"><span style="display:inline-block;transform:scaleX(0.9643);transform-origin:left 50%">2</span></div>
<div style="position:absolute;left:525px;top:624.15px;font-size:14.0px;line-height:14.0px;color:#141414;white-space:nowrap;"><span style="display:inline-block;transform:scaleX(0.9643);transform-origin:left 50%">02</span></div>
<div style="position:absolute;left:651px;top:624.15px;font-size:14.0px;line-height:14.0px;color:#141414;white-space:nowrap;"><span style="display:inline-block;transform:scaleX(0.9643);transform-origin:left 50%">Pack</span></div>
<div style="position:absolute;left:971px;top:624.15px;font-size:14.0px;line-height:14.0px;color:#141414;white-space:nowrap;"><span style="display:inline-block;transform:scaleX(0.9643);transform-origin:left 50%">02</span></div>
<div style="position:absolute;left:1116px;top:624.15px;font-size:14.0px;line-height:14.0px;color:#141414;white-space:nowrap;"><span style="display:inline-block;transform:scaleX(0.9643);transform-origin:left 50%">M</span></div>
<div style="position:absolute;left:500px;top:646.15px;font-size:14.0px;line-height:14.0px;color:#141414;white-space:nowrap;"><span style="display:inline-block;transform:scaleX(0.9643);transform-origin:left 50%">3</span></div>
<div style="position:absolute;left:525px;top:646.15px;font-size:14.0px;line-height:14.0px;color:#141414;white-space:nowrap;"><span style="display:inline-block;transform:scaleX(0.9643);transform-origin:left 50%">03</span></div>
<div style="position:absolute;left:651px;top:646.15px;font-size:14.0px;line-height:14.0px;color:#141414;white-space:nowrap;"><span style="display:inline-block;transform:scaleX(0.9643);transform-origin:left 50%">Mixer</span></div>
<div style="position:absolute;left:971px;top:646.15px;font-size:14.0px;line-height:14.0px;color:#141414;white-space:nowrap;"><span style="display:inline-block;transform:scaleX(0.9643);transform-origin:left 50%">01</span></div>
<div style="position:absolute;left:1116px;top:646.15px;font-size:14.0px;line-height:14.0px;color:#141414;white-space:nowrap;"><span style="display:inline-block;transform:scaleX(0.9643);transform-origin:left 50%">M</span></div>
<div style="position:absolute;left:500px;top:668.15px;font-size:14.0px;line-height:14.0px;color:#141414;white-space:nowrap;"><span style="display:inline-block;transform:scaleX(0.9643);transform-origin:left 50%">4</span></div>
<div style="position:absolute;left:525px;top:668.15px;font-size:14.0px;line-height:14.0px;color:#141414;white-space:nowrap;"><span style="display:inline-block;transform:scaleX(0.9643);transform-origin:left 50%">04</span></div>
<div style="position:absolute;left:651px;top:668.15px;font-size:14.0px;line-height:14.0px;color:#141414;white-space:nowrap;"><span style="display:inline-block;transform:scaleX(0.9643);transform-origin:left 50%">Tool-01</span></div>
<div style="position:absolute;left:971px;top:668.15px;font-size:14.0px;line-height:14.0px;color:#141414;white-space:nowrap;"><span style="display:inline-block;transform:scaleX(0.9643);transform-origin:left 50%">04</span></div>
<div style="position:absolute;left:1116px;top:668.15px;font-size:14.0px;line-height:14.0px;color:#141414;white-space:nowrap;"><span style="display:inline-block;transform:scaleX(0.9643);transform-origin:left 50%">T</span></div>
<div style="position:absolute;left:500px;top:690.15px;font-size:14.0px;line-height:14.0px;color:#141414;white-space:nowrap;"><span style="display:inline-block;transform:scaleX(0.9643);transform-origin:left 50%">5</span></div>
<div style="position:absolute;left:525px;top:690.15px;font-size:14.0px;line-height:14.0px;color:#141414;white-space:nowrap;"><span style="display:inline-block;transform:scaleX(0.9643);transform-origin:left 50%">05</span></div>
<div style="position:absolute;left:651px;top:690.15px;font-size:14.0px;line-height:14.0px;color:#141414;white-space:nowrap;"><span style="display:inline-block;transform:scaleX(0.9643);transform-origin:left 50%">Prep</span></div>
<div style="position:absolute;left:971px;top:690.15px;font-size:14.0px;line-height:14.0px;color:#141414;white-space:nowrap;"><span style="display:inline-block;transform:scaleX(0.9643);transform-origin:left 50%">03</span></div>
<div style="position:absolute;left:1116px;top:690.15px;font-size:14.0px;line-height:14.0px;color:#141414;white-space:nowrap;"><span style="display:inline-block;transform:scaleX(0.9643);transform-origin:left 50%">M</span></div>
<div style="position:absolute;left:500px;top:712.15px;font-size:14.0px;line-height:14.0px;color:#141414;white-space:nowrap;"><span style="display:inline-block;transform:scaleX(0.9643);transform-origin:left 50%">6</span></div>
<div style="position:absolute;left:525px;top:712.15px;font-size:14.0px;line-height:14.0px;color:#141414;white-space:nowrap;"><span style="display:inline-block;transform:scaleX(0.9643);transform-origin:left 50%">06</span></div>
<div style="position:absolute;left:651px;top:712.15px;font-size:14.0px;line-height:14.0px;color:#141414;white-space:nowrap;"><span style="display:inline-block;transform:scaleX(0.9643);transform-origin:left 50%">Labour</span></div>
<div style="position:absolute;left:971px;top:712.15px;font-size:14.0px;line-height:14.0px;color:#141414;white-space:nowrap;"><span style="display:inline-block;transform:scaleX(0.9643);transform-origin:left 50%">06</span></div>
<div style="position:absolute;left:1116px;top:712.15px;font-size:14.0px;line-height:14.0px;color:#141414;white-space:nowrap;"><span style="display:inline-block;transform:scaleX(0.9643);transform-origin:left 50%">L</span></div>
<div style="position:absolute;left:500px;top:734.15px;font-size:14.0px;line-height:14.0px;color:#141414;white-space:nowrap;"><span style="display:inline-block;transform:scaleX(0.9643);transform-origin:left 50%">7</span></div>
<div style="position:absolute;left:525px;top:734.15px;font-size:14.0px;line-height:14.0px;color:#141414;white-space:nowrap;"><span style="display:inline-block;transform:scaleX(0.9643);transform-origin:left 50%">07</span></div>
<div style="position:absolute;left:651px;top:734.15px;font-size:14.0px;line-height:14.0px;color:#141414;white-space:nowrap;"><span style="display:inline-block;transform:scaleX(0.9643);transform-origin:left 50%">Tool-01</span></div>
<div style="position:absolute;left:971px;top:734.15px;font-size:14.0px;line-height:14.0px;color:#141414;white-space:nowrap;"><span style="display:inline-block;transform:scaleX(0.9643);transform-origin:left 50%">04</span></div>
<div style="position:absolute;left:1116px;top:734.15px;font-size:14.0px;line-height:14.0px;color:#141414;white-space:nowrap;"><span style="display:inline-block;transform:scaleX(0.9643);transform-origin:left 50%">T</span></div>
<div style="position:absolute;left:500px;top:756.15px;font-size:14.0px;line-height:14.0px;color:#141414;white-space:nowrap;"><span style="display:inline-block;transform:scaleX(0.9643);transform-origin:left 50%">8</span></div>
<div style="position:absolute;left:525px;top:756.15px;font-size:14.0px;line-height:14.0px;color:#141414;white-space:nowrap;"><span style="display:inline-block;transform:scaleX(0.9643);transform-origin:left 50%">45698</span></div>
<div style="position:absolute;left:651px;top:756.15px;font-size:14.0px;line-height:14.0px;color:#141414;white-space:nowrap;"><span style="display:inline-block;transform:scaleX(0.9643);transform-origin:left 50%">Painting</span></div>
<div style="position:absolute;left:971px;top:756.15px;font-size:14.0px;line-height:14.0px;color:#141414;white-space:nowrap;"><span style="display:inline-block;transform:scaleX(0.9643);transform-origin:left 50%"></span></div>
<div style="position:absolute;left:1116px;top:756.15px;font-size:14.0px;line-height:14.0px;color:#141414;white-space:nowrap;"><span style="display:inline-block;transform:scaleX(0.9643);transform-origin:left 50%">S</span></div>
<div style="position:absolute;left:500px;top:778.15px;font-size:14.0px;line-height:14.0px;color:#141414;white-space:nowrap;"><span style="display:inline-block;transform:scaleX(0.9643);transform-origin:left 50%">9</span></div>
<div style="position:absolute;left:525px;top:778.15px;font-size:14.0px;line-height:14.0px;color:#141414;white-space:nowrap;"><span style="display:inline-block;transform:scaleX(0.9643);transform-origin:left 50%">Ball Mill 01</span></div>
<div style="position:absolute;left:651px;top:778.15px;font-size:14.0px;line-height:14.0px;color:#141414;white-space:nowrap;"><span style="display:inline-block;transform:scaleX(0.9643);transform-origin:left 50%">Ball Mill</span></div>
<div style="position:absolute;left:971px;top:778.15px;font-size:14.0px;line-height:14.0px;color:#141414;white-space:nowrap;"><span style="display:inline-block;transform:scaleX(0.9643);transform-origin:left 50%">Food</span></div>
<div style="position:absolute;left:1116px;top:778.15px;font-size:14.0px;line-height:14.0px;color:#141414;white-space:nowrap;"><span style="display:inline-block;transform:scaleX(0.9643);transform-origin:left 50%">M</span></div>
<div style="position:absolute;left:499px;top:800.15px;font-size:14.0px;line-height:14.0px;color:#141414;white-space:nowrap;"><span style="display:inline-block;transform:scaleX(0.9643);transform-origin:left 50%">10</span></div>
<div style="position:absolute;left:525px;top:800.15px;font-size:14.0px;line-height:14.0px;color:#141414;white-space:nowrap;"><span style="display:inline-block;transform:scaleX(0.9643);transform-origin:left 50%">Container 01</span></div>
<div style="position:absolute;left:651px;top:800.15px;font-size:14.0px;line-height:14.0px;color:#141414;white-space:nowrap;"><span style="display:inline-block;transform:scaleX(0.9643);transform-origin:left 50%">Container for Heating and Storage</span></div>
<div style="position:absolute;left:971px;top:800.15px;font-size:14.0px;line-height:14.0px;color:#141414;white-space:nowrap;"><span style="display:inline-block;transform:scaleX(0.9643);transform-origin:left 50%">Food</span></div>
<div style="position:absolute;left:1116px;top:800.15px;font-size:14.0px;line-height:14.0px;color:#141414;white-space:nowrap;"><span style="display:inline-block;transform:scaleX(0.9643);transform-origin:left 50%">M</span></div>
<svg style="position:absolute;left:1163px;top:569px" width="14" height="14" viewBox="0 0 14 14"><rect x="0.5" y="0.5" width="13" height="13" fill="#fff" stroke="#c8d4e2"/><path d="M2.8 11.2 L10.2 3.8 M4.6 3.2 H10.8 V9.4" fill="none" stroke="#8b9fbc" stroke-width="2"/></svg>
<div style="position:absolute;left:1168px;top:619px;width:13.5px;height:136px;background:#dcdcdc;border-radius:6px;"></div>
<div style="position:absolute;left:543px;top:823px;width:554px;height:12px;background:#dcdcdc;border-radius:6px;"></div>
<div style="position:absolute;left:496px;top:858px;width:89px;height:27px;background:#2d4d6c;"></div>
<div style="position:absolute;left:496px;top:858px;width:5px;height:27px;background:#e5a50f;"></div>
<div style="position:absolute;left:240.5px;width:600px;text-align:center;top:864.65px;font-size:14.0px;line-height:14.0px;color:#f5f7fa;white-space:nowrap;"><span style="display:inline-block;transform:scaleX(0.9643);transform-origin:center 50%">Choose</span></div>
<div style="position:absolute;left:592px;top:858px;width:89px;height:27px;background:#2d4d6c;"></div>
<div style="position:absolute;left:336.5px;width:600px;text-align:center;top:864.65px;font-size:14.0px;line-height:14.0px;color:#f5f7fa;white-space:nowrap;"><span style="display:inline-block;transform:scaleX(0.9643);transform-origin:center 50%">Cancel</span></div>
<svg style="position:absolute;left:0;top:0" width="1858" height="979" viewBox="0 0 1858 979"><defs><filter id="sh" x="-20%" y="-20%" width="140%" height="140%"><feDropShadow dx="1.5" dy="2" stdDeviation="1.5" flood-color="#000" flood-opacity="0.28"/></filter></defs><g filter="url(#sh)"><line x1="313.2" y1="739.6" x2="474.6" y2="524" stroke="#ee4343" stroke-width="4.9"/><path d="M481.6 514.4 L466.6 522.6 L477.6 530.4 Z" fill="#ee4343" stroke="#ee4343" stroke-width="1" stroke-linejoin="round"/></g></svg>
</body></html>
